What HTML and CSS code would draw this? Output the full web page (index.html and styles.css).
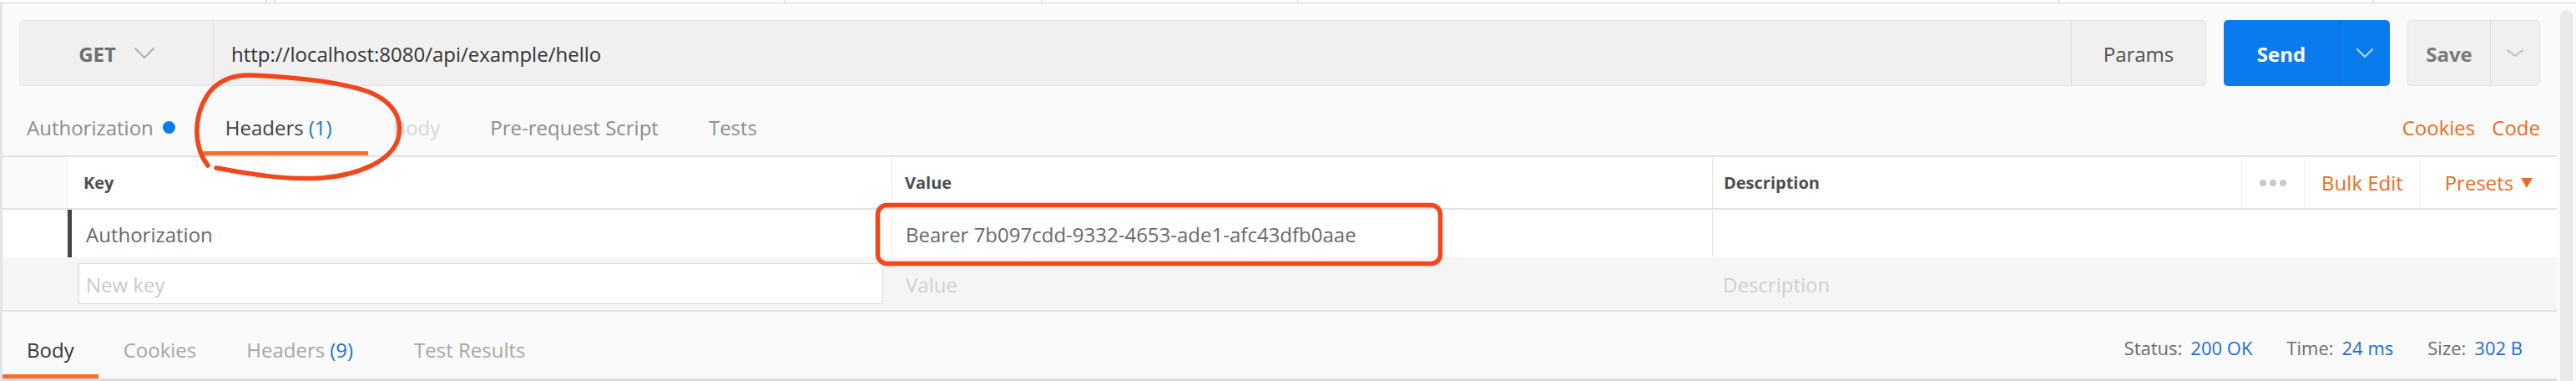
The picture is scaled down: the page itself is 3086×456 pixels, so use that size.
FILE: index.html
```html
<!DOCTYPE html>
<html>
<head>
<meta charset="utf-8">
<title>Postman request</title>
<link rel="stylesheet" href="styles.css">
</head>
<body>
<div class="page">
  <div class="tabstrip">
    <div class="ts"></div><div class="ts"></div><div class="ts"></div><div class="ts"></div><div class="ts"></div><div class="ts"></div><div class="ts"></div><div class="ts last"></div>
  </div>
  <div class="workspace">
    <div class="main">
      <div class="reqbar">
        <div class="reqgroup">
          <div class="method">
            <span class="method-label">GET</span>
            <svg class="chev chev-get" viewBox="0 0 24 14"><polyline points="1,1 12,12 23,1"/></svg>
          </div>
          <div class="url">http://localhost:8080/api/example/hello</div>
          <div class="params">Params</div>
        </div>
        <div class="send">
          <div class="send-main">Send</div>
          <div class="send-drop"><svg class="chev chev-send" viewBox="0 0 20 12"><polyline points="1,1 10,10 19,1"/></svg></div>
        </div>
        <div class="save">
          <div class="save-main">Save</div>
          <div class="save-drop"><svg class="chev chev-save" viewBox="0 0 20 10"><polyline points="1,1 10,8 19,1"/></svg></div>
        </div>
      </div>

      <div class="reqtabs">
        <div class="tablist">
          <div class="tab">Authorization<span class="dot"></span></div>
          <div class="tab active">Headers <span class="count">(1)</span></div>
          <div class="tab disabled">Body</div>
          <div class="tab">Pre-request Script</div>
          <div class="tab">Tests</div>
        </div>
        <div class="links">
          <span class="link">Cookies</span>
          <span class="link">Code</span>
        </div>
      </div>

      <div class="row head">
        <div class="c gutter"></div>
        <div class="c key">Key</div>
        <div class="c val">Value</div>
        <div class="c desc">Description</div>
        <div class="c act dots"><span class="d"></span><span class="d"></span><span class="d"></span></div>
        <div class="c act link">Bulk Edit</div>
        <div class="c act link">Presets<span class="tri"></span></div>
      </div>

      <div class="row item">
        <div class="c gutter"></div>
        <div class="c key handle">Authorization</div>
        <div class="c val">Bearer 7b097cdd-9332-4653-ade1-afc43dfb0aae</div>
        <div class="c desc"></div>
        <div class="c tail"></div>
      </div>

      <div class="row new">
        <div class="c gutter"></div>
        <div class="c key"><div class="input">New key</div></div>
        <div class="c val ph">Value</div>
        <div class="c desc ph">Description</div>
        <div class="c tail"></div>
      </div>

      <div class="restabs">
        <div class="tablist">
          <div class="rtab active">Body</div>
          <div class="rtab">Cookies</div>
          <div class="rtab">Headers <span class="count">(9)</span></div>
          <div class="rtab">Test Results</div>
        </div>
        <div class="meta">
          <span class="mi"><span class="ml">Status:</span><span class="mv">200 OK</span></span>
          <span class="mi"><span class="ml">Time:</span><span class="mv">24 ms</span></span>
          <span class="mi"><span class="ml">Size:</span><span class="mv">302 B</span></span>
        </div>
      </div>
    </div>
    <div class="scrolltrack"></div>
  </div>

  <svg class="annot" viewBox="0 0 3086 456">
    <path d="M 249 198 C 232 176, 231 140, 249 113 C 261 96, 279 89, 302 90 C 345 92, 402 96, 442 110 C 472 122, 483 143, 477 166 C 469 192, 432 209, 386 213 C 342 216, 292 207, 259 201"/>
    <rect x="1051.5" y="245.5" width="674" height="70" rx="11"/>
  </svg>
</div>
</body>
</html>
```

FILE: styles.css
```css
* { box-sizing: border-box; }

html, body {
  margin: 0;
  padding: 0;
}

body {
  width: 3086px;
  height: 456px;
  overflow: hidden;
  background: #fafafa;
  font-family: "Open Sans", "Noto Sans", sans-serif;
  font-size: 24px;
  color: #333;
}

.page {
  position: relative;
  width: 3086px;
  height: 456px;
}

/* top tab strip remnant */
.tabstrip {
  height: 4px;
  display: grid;
  grid-template-columns: 320px 10px 610px 308px 307px 912px 377px 1fr;
  background: #fff;
  border-bottom: 1px solid #d4d4d4;
}
.ts { border-right: 1px solid #d0d0d0; }
.ts.last { border-right: none; }

.workspace {
  display: flex;
  height: 452px;
}

.main {
  flex: 1;
  border-left: 3px solid #e4e4e4;
  display: flex;
  flex-direction: column;
}

.scrolltrack {
  width: 15px;
  margin: 8px 4px 0 4px;
  background: #e9e9e9;
  border-radius: 8px 8px 0 0;
}

/* request bar */
.reqbar {
  display: flex;
  gap: 21px;
  height: 79px;
  margin: 20px 20px 0 20px;
}

.reqgroup {
  flex: 1;
  display: flex;
  background: #f0f0f0;
  border: 1px solid #e3e3e3;
  border-radius: 5px;
}

.method {
  width: 232px;
  display: flex;
  align-items: center;
  justify-content: center;
  gap: 22px;
  border-right: 1px solid #dedede;
  padding-top: 2px;
}
.method-label {
  font-weight: 700;
  color: #6e6e6e;
  font-size: 24px;
}

.chev { fill: none; stroke-linecap: round; stroke-linejoin: round; }
.chev-get { width: 24px; height: 14px; stroke: #b0b0b0; stroke-width: 2; margin-top: -2px; }
.chev-send { width: 20px; height: 12px; stroke: #b9d6f7; stroke-width: 2; }
.chev-save { width: 20px; height: 10px; stroke: #b8b8b8; stroke-width: 1.6; }

.url {
  flex: 1;
  display: flex;
  align-items: center;
  padding: 2px 0 0 21px;
  color: #333;
}

.params {
  width: 161px;
  display: flex;
  align-items: center;
  justify-content: center;
  border-left: 1px solid #dedede;
  color: #505050;
  padding-top: 2px;
}

.send {
  width: 199px;
  display: flex;
  background: #097bed;
  border-radius: 5px;
}
.send-main {
  width: 138px;
  display: flex;
  align-items: center;
  justify-content: center;
  color: #fff;
  font-weight: 700;
  padding-top: 2px;
}
.send-drop {
  flex: 1;
  display: flex;
  align-items: center;
  justify-content: center;
  border-left: 1px solid #0a6ad0;
}

.save {
  width: 159px;
  display: flex;
  background: #f0f0f0;
  border: 1px solid #e3e3e3;
  border-radius: 5px;
}
.save-main {
  width: 98px;
  display: flex;
  align-items: center;
  justify-content: center;
  color: #7a7a7a;
  font-weight: 700;
  padding-top: 2px;
}
.save-drop {
  flex: 1;
  display: flex;
  align-items: center;
  justify-content: center;
  border-left: 1px solid #dedede;
}

/* request tabs */
.reqtabs {
  height: 85px;
  display: flex;
  justify-content: space-between;
  border-bottom: 2px solid #e2e2e2;
}

.tablist {
  display: flex;
  height: 100%;
}

.tab {
  display: flex;
  align-items: flex-end;
  padding: 0 30px 12px 30px;
  line-height: 32px;
  color: #8c8c8c;
  border-bottom: 5px solid transparent;
  white-space: nowrap;
}
.tab:first-child { padding-left: 29px; }
.tab.active { color: #404040; border-bottom-color: #f47023; }
.tab.disabled { color: #d8d8d8; }
.count { color: #1c73d6; margin-left: 6px; margin-right: 13px; }

.dot {
  width: 15px;
  height: 15px;
  border-radius: 50%;
  background: #097bed;
  margin: 0 0 9px 11px;
}

.links {
  display: flex;
  align-items: flex-end;
  gap: 20px;
  padding: 0 20px 17px 0;
  line-height: 32px;
}
.link { color: #ec6c1f; }

/* table rows */
.row {
  display: grid;
  grid-template-columns: 77px 988px 983px 634px 75px 139px 164px;
}
.row.item, .row.new { grid-template-columns: 77px 988px 983px 634px 1fr; }

.c {
  display: flex;
  align-items: center;
  white-space: nowrap;
}

.head {
  height: 63px;
  border-bottom: 2px solid #e2e2e2;
}
.head .c { background: #fff; font-size: 20px; font-weight: 700; color: #4e4e4e; line-height: 28px; padding-top: 1px; }
.head .gutter { background: transparent; }
.head .key { padding-left: 19px; border-left: 1px solid #efefef; }
.head .val { padding-left: 15px; border-left: 1px solid #e8e8e8; }
.head .desc { padding-left: 13px; border-left: 1px solid #e8e8e8; }
.head .act {
  justify-content: center;
  font-size: 24px;
  font-weight: 400;
  border-left: 1px solid #f0f0f0;
}
.head .act.link { color: #ec6c1f; }

.dots { gap: 4px; }
.d {
  width: 8px;
  height: 8px;
  border-radius: 50%;
  background: #c9c9c9;
}

.tri {
  width: 0;
  height: 0;
  border-left: 7px solid transparent;
  border-right: 7px solid transparent;
  border-top: 12px solid #ec6c1f;
  margin-left: 9px;
}

.item {
  height: 57px;
  background: #fff;
}
.item .c { color: #686868; line-height: 32px; padding-top: 2px; }
.item .key.handle {
  border-left: 5px solid #444;
  padding-left: 17px;
  margin-left: 1px;
}
.item .val { padding-left: 16px; border-left: 1px solid #e8e8e8; }
.item .desc { border-left: 1px solid #e8e8e8; }

.new {
  height: 65px;
  background: #f5f5f5;
  border-bottom: 2px solid #e0e0e0;
}
.new .key { padding: 0 10px 0 14px; }
.input {
  width: 964px;
  height: 49px;
  background: #fff;
  border: 1px solid #dadada;
  display: flex;
  align-items: center;
  padding: 2px 0 0 8px;
  color: #cacaca;
  line-height: 32px;
}
.new .ph { color: #cfcfcf; line-height: 32px; padding-top: 2px; }
.new .val { padding-left: 17px; }
.new .desc { padding-left: 13px; }

/* response tabs */
.restabs {
  flex: 1;
  display: flex;
  justify-content: space-between;
  border-bottom: 3px solid #dcdcdc;
}

.rtab {
  display: flex;
  align-items: flex-end;
  padding: 0 30px 13px 30px;
  line-height: 32px;
  color: #a6a6a6;
  border-bottom: 5px solid transparent;
  white-space: nowrap;
}
.rtab:first-child { padding-left: 29px; padding-right: 29px; }
.rtab.active { color: #333; border-bottom-color: #f47023; }

.meta {
  display: flex;
  align-items: flex-end;
  gap: 41px;
  padding: 0 41px 22px 0;
  font-size: 22px;
  line-height: 30px;
}
.ml { color: #6c6c6c; }
.mv { color: #1a6fd4; margin-left: 10px; }

/* hand-drawn annotations */
.annot {
  position: absolute;
  left: 0;
  top: 0;
  width: 3086px;
  height: 456px;
  pointer-events: none;
  fill: none;
  stroke: #f2461c;
  stroke-width: 5.5;
  stroke-linecap: round;
  stroke-linejoin: round;
}
```
